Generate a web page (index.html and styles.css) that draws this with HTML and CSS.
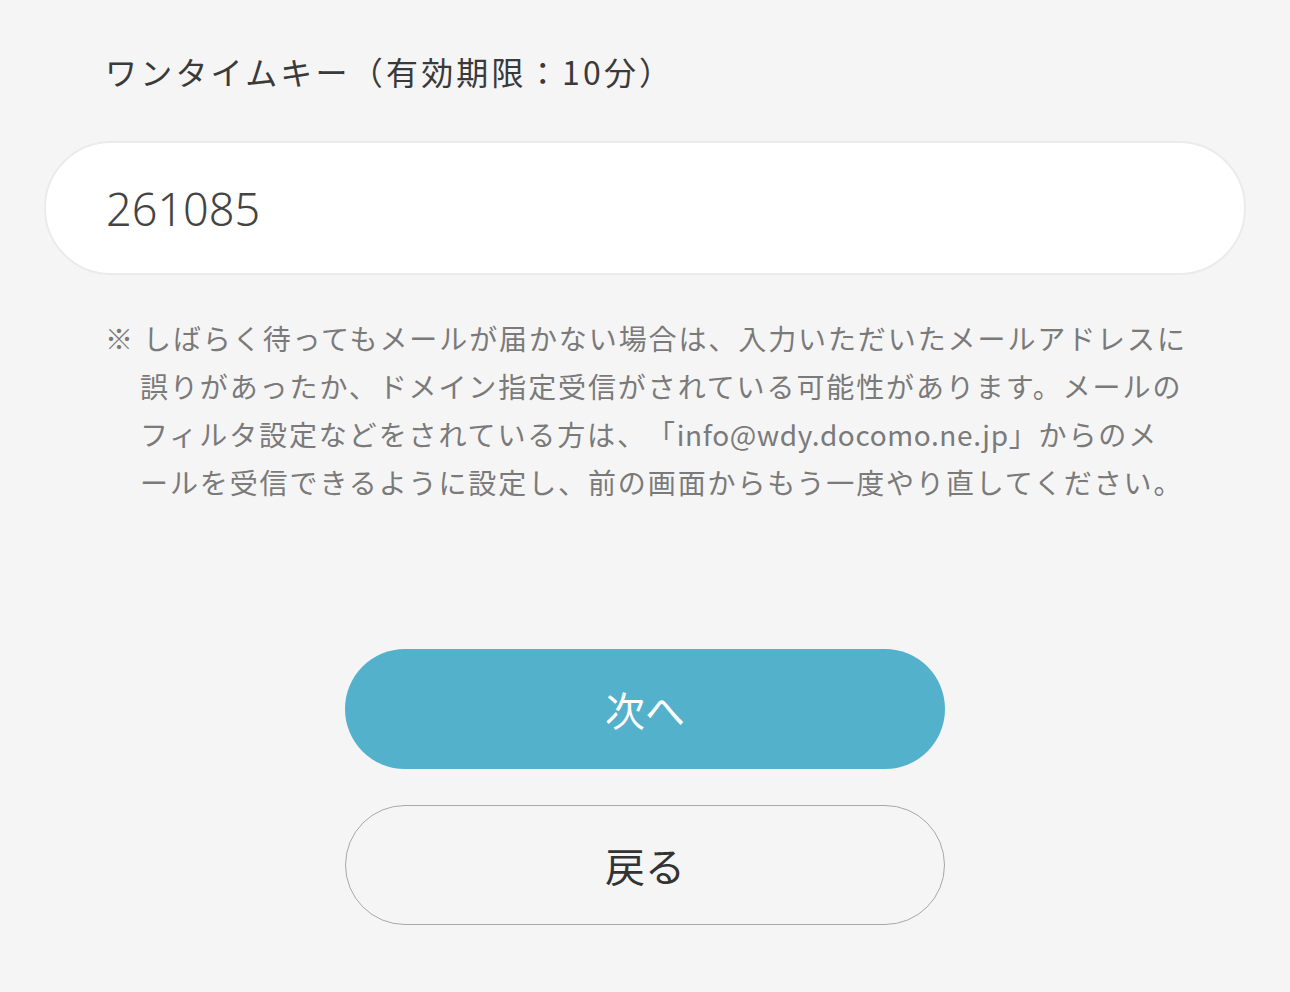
FILE: index.html
```html
<!DOCTYPE html>
<html lang="ja">
<head>
    <meta charset="UTF-8">
    <meta name="viewport" content="width=device-width, initial-scale=1.0">
    <title>ワンタイムキー</title>
    <link rel="stylesheet" href="styles.css">
</head>
<body>
    <div class="page">
        <label class="field-label" for="onetime-key">ワンタイムキー（有効期限：10分）</label>
        <input class="key-input" id="onetime-key" type="text" value="261085">
        <p class="note">※ しばらく待ってもメールが届かない場合は、入力いただいたメールアドレスに<br>誤りがあったか、ドメイン指定受信がされている可能性があります。メールの<br>フィルタ設定などをされている方は、「<span class="mail">info@wdy.docomo.ne.jp</span>」からのメ<br>ールを受信できるように設定し、前の画面からもう一度やり直してください。</p>
        <div class="actions">
            <button class="btn btn-primary" type="button">次へ</button>
            <button class="btn btn-back" type="button">戻る</button>
        </div>
    </div>
</body>
</html>
```

FILE: styles.css
```css
body{
    margin: 0;
    background-color: #f5f5f5;
    font-family: "Noto Sans CJK JP", "Noto Sans", sans-serif;
    color: #333;
    text-spacing-trim: space-all;
}
.page{
    padding: 47px 44px 0;
}
.field-label{
    display: block;
    padding-left: 61px;
    font-size: 32px;
    line-height: 48px;
    letter-spacing: 3.2px;
    color: #3a3a3a;
}
.key-input{
    display: block;
    box-sizing: border-box;
    width: 100%;
    height: 134px;
    margin-top: 46px;
    padding: 0 60px;
    border: 2px solid #ebebeb;
    border-radius: 67px;
    background-color: #fff;
    font-family: "Noto Sans", sans-serif;
    font-size: 45px;
    font-weight: 300;
    color: #444;
    outline: none;
}
.note{
    margin: 39px 0 0;
    padding-left: 96px;
    text-indent: -35px;
    font-size: 28px;
    line-height: 48px;
    letter-spacing: 1.9px;
    color: #7a7a7a;
    white-space: nowrap;
}
.mail{
    letter-spacing: 0.6px;
}
.actions{
    display: flex;
    flex-direction: column;
    align-items: center;
    gap: 36px;
    margin-top: 143px;
}
.btn{
    box-sizing: border-box;
    width: 600px;
    height: 120px;
    border-radius: 60px;
    font-family: "Noto Sans CJK JP", "Noto Sans", sans-serif;
    font-size: 40px;
    cursor: pointer;
}
.btn-primary{
    border: none;
    background-color: #53b1cc;
    color: #fff;
}
.btn-back{
    border: 1px solid #a8a8a8;
    background-color: #f5f5f5;
    color: #333;
}
```
